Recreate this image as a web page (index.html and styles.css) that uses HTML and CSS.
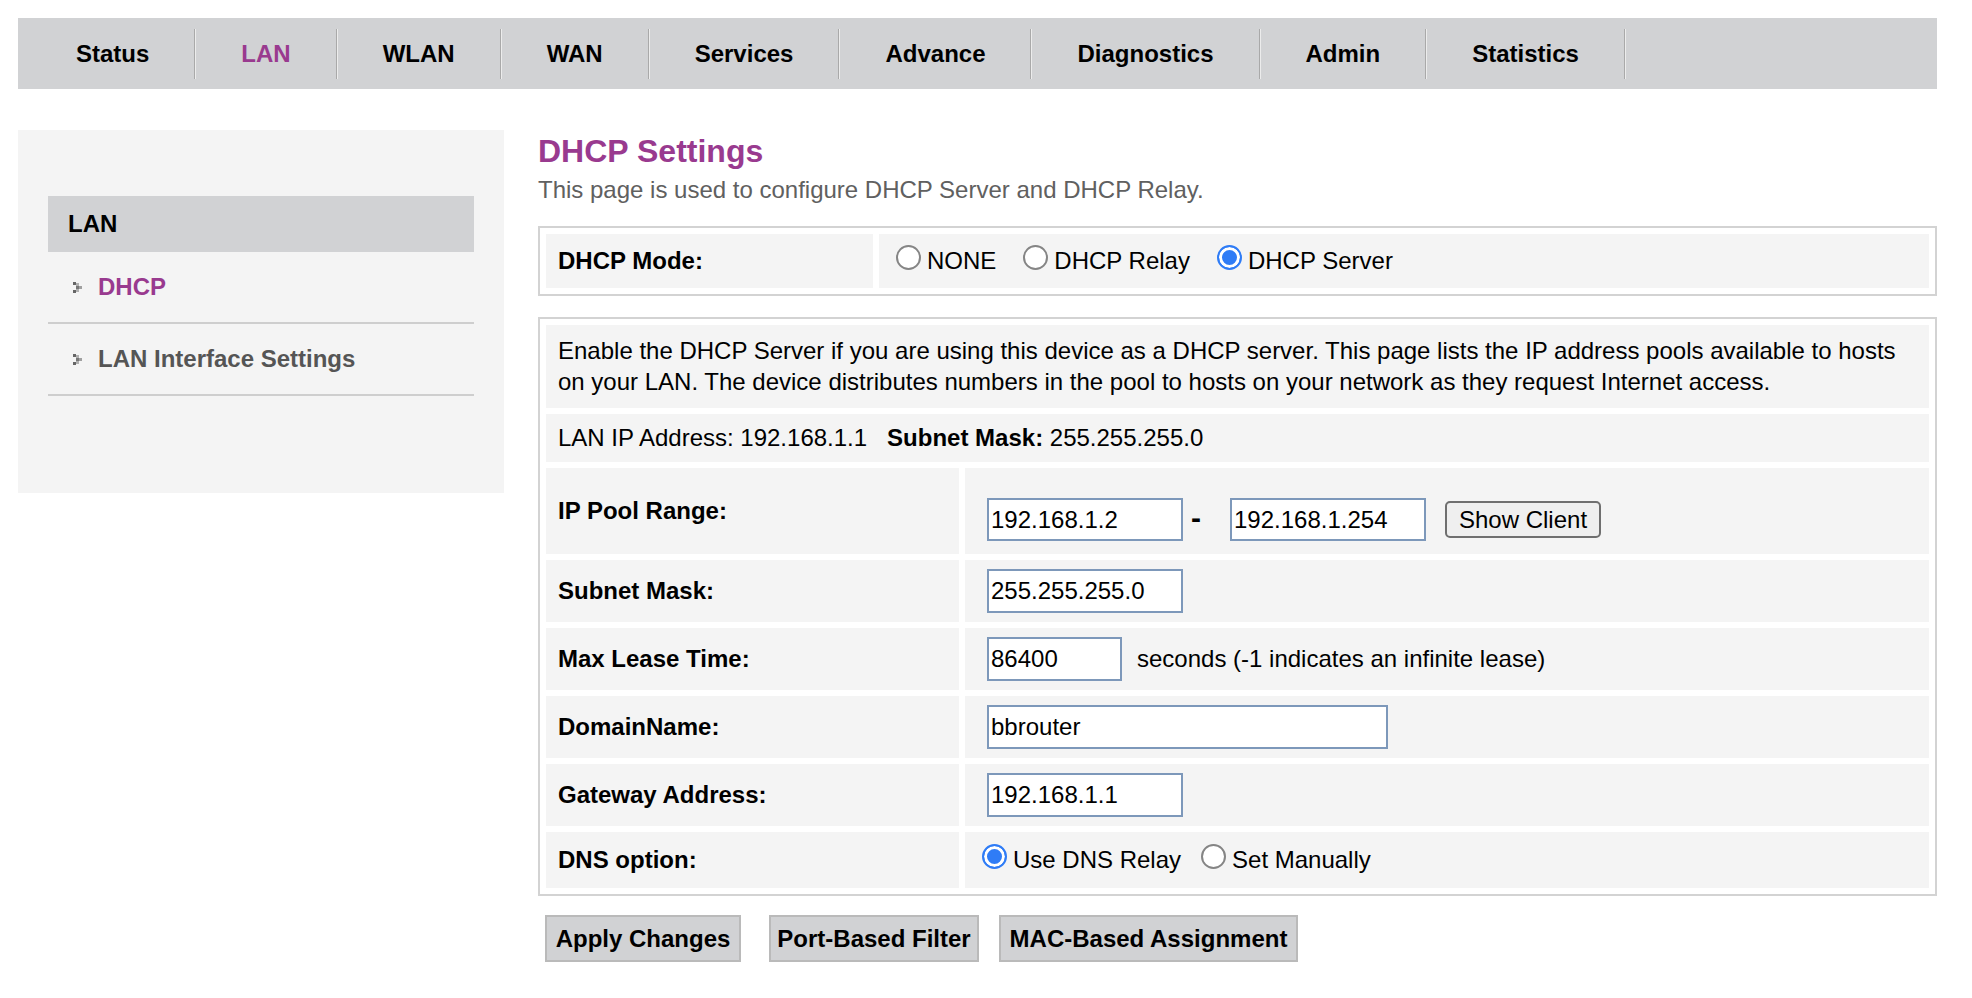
FILE: index.html
```html
<!DOCTYPE html>
<html lang="en">
<head>
<meta charset="utf-8">
<title>DHCP Settings</title>
<link rel="stylesheet" href="styles.css">
</head>
<body>
<div class="page">
  <nav class="topnav">
    <a class="nav-item" href="#">Status</a>
    <a class="nav-item active" href="#">LAN</a>
    <a class="nav-item" href="#">WLAN</a>
    <a class="nav-item" href="#">WAN</a>
    <a class="nav-item" href="#">Services</a>
    <a class="nav-item" href="#">Advance</a>
    <a class="nav-item" href="#">Diagnostics</a>
    <a class="nav-item" href="#">Admin</a>
    <a class="nav-item" href="#">Statistics</a>
  </nav>

  <div class="layout">
    <aside class="sidebar">
      <div class="side-head">LAN</div>
      <ul class="side-list">
        <li class="side-item active"><svg class="bullet" width="9" height="11" viewBox="0 0 9 11"><rect x="0" y="0" width="3" height="3" fill="#666"/><rect x="3" y="1" width="3" height="3" fill="#b0b0b0"/><rect x="3" y="4" width="3" height="3" fill="#777"/><rect x="6" y="4" width="3" height="3" fill="#a0a0a0"/><rect x="3" y="7" width="3" height="3" fill="#b0b0b0"/><rect x="0" y="8" width="3" height="3" fill="#666"/></svg>DHCP</li>
        <li class="side-item"><svg class="bullet" width="9" height="11" viewBox="0 0 9 11"><rect x="0" y="0" width="3" height="3" fill="#666"/><rect x="3" y="1" width="3" height="3" fill="#b0b0b0"/><rect x="3" y="4" width="3" height="3" fill="#777"/><rect x="6" y="4" width="3" height="3" fill="#a0a0a0"/><rect x="3" y="7" width="3" height="3" fill="#b0b0b0"/><rect x="0" y="8" width="3" height="3" fill="#666"/></svg>LAN Interface Settings</li>
      </ul>
    </aside>

    <main class="content">
      <h1 class="title">DHCP Settings</h1>
      <p class="subtitle">This page is used to configure DHCP Server and DHCP Relay.</p>

      <div class="box mode-box">
        <div class="cell label">DHCP Mode:</div>
        <div class="cell value radios">
          <label class="opt"><input class="radio" type="radio" name="mode">NONE</label>
          <label class="opt"><input class="radio" type="radio" name="mode">DHCP Relay</label>
          <label class="opt"><input class="radio" type="radio" name="mode" checked>DHCP Server</label>
        </div>
      </div>

      <div class="box form-box">
        <div class="cell full desc">Enable the DHCP Server if you are using this device as a DHCP server. This page lists the IP address pools available to hosts on your LAN. The device distributes numbers in the pool to hosts on your network as they request Internet access.</div>
        <div class="cell full info">LAN IP Address: 192.168.1.1&nbsp;&nbsp; <b>Subnet Mask:</b> 255.255.255.0</div>

        <div class="cell label">IP Pool Range:</div>
        <div class="cell value pool">
          <input class="field w-ip" type="text" value="192.168.1.2">
          <span class="dash">-</span>
          <input class="field w-ip" type="text" value="192.168.1.254">
          <button class="show-btn" type="button">Show Client</button>
        </div>

        <div class="cell label">Subnet Mask:</div>
        <div class="cell value"><input class="field w-ip" type="text" value="255.255.255.0"></div>

        <div class="cell label">Max Lease Time:</div>
        <div class="cell value"><input class="field w-lease" type="text" value="86400"><span class="hint">seconds (-1 indicates an infinite lease)</span></div>

        <div class="cell label">DomainName:</div>
        <div class="cell value"><input class="field w-domain" type="text" value="bbrouter"></div>

        <div class="cell label">Gateway Address:</div>
        <div class="cell value"><input class="field w-ip" type="text" value="192.168.1.1"></div>

        <div class="cell label dns-label">DNS option:</div>
        <div class="cell value radios dns">
          <label class="opt opt-tight"><input class="radio" type="radio" name="dns" checked>Use DNS Relay</label>
          <label class="opt"><input class="radio" type="radio" name="dns">Set Manually</label>
        </div>
      </div>

      <div class="actions">
        <button class="act-btn btn-apply" type="button">Apply Changes</button>
        <button class="act-btn btn-port" type="button">Port-Based Filter</button>
        <button class="act-btn btn-mac" type="button">MAC-Based Assignment</button>
      </div>
    </main>
  </div>
</div>
</body>
</html>
```

FILE: styles.css
```css
* { box-sizing: border-box; }

html, body {
  margin: 0;
  padding: 0;
  background: #ffffff;
}

body {
  font-family: "Liberation Sans", Arial, Helvetica, sans-serif;
  font-size: 24px;
  color: #000;
}

.page {
  width: 1937px;
  padding: 18px 0 0 18px;
}

/* ---------- top navigation ---------- */
.topnav {
  display: flex;
  align-items: center;
  height: 71px;
  background: #d1d2d4;
  padding-left: 13px;
}

.nav-item {
  display: block;
  height: 50px;
  line-height: 50px;
  padding: 0 45px;
  margin-right: 1px;
  font-weight: bold;
  color: #000;
  text-decoration: none;
  border-right: 1px solid #a9a9a9;
  box-shadow: 1px 0 0 #ececec;
}

.nav-item.active { color: #993a8f; }

/* ---------- layout ---------- */
.layout {
  display: flex;
  align-items: flex-start;
  margin-top: 41px;
}

.sidebar {
  width: 486px;
  flex: none;
  background: #f4f4f4;
  padding: 66px 30px 97px;
}

.side-head {
  height: 56px;
  line-height: 56px;
  padding-left: 20px;
  background: #d1d2d4;
  font-weight: bold;
}

.side-list {
  list-style: none;
  margin: 0;
  padding: 0;
}

.side-item {
  display: flex;
  align-items: center;
  height: 72px;
  padding-left: 25px;
  border-bottom: 2px solid #cecece;
  font-weight: bold;
  color: #555;
}

.side-item.active { color: #993a8f; }

.bullet {
  flex: none;
  margin-right: 16px;
}

/* ---------- content ---------- */
.content {
  flex: 1;
  margin-left: 34px;
}

.title {
  margin: 0;
  font-size: 32px;
  line-height: 42px;
  font-weight: bold;
  color: #993a8f;
}

.subtitle {
  margin: 3px 0 0;
  line-height: 30px;
  color: #606060;
}

.box {
  display: grid;
  gap: 6px;
  padding: 6px;
  border: 2px solid #d3d3d3;
  background: #fff;
}

.mode-box {
  margin-top: 21px;
  grid-template-columns: 327px 1fr;
}

.form-box {
  margin-top: 21px;
  grid-template-columns: 413px 1fr;
}

.cell {
  background: #f4f4f4;
  display: flex;
  align-items: center;
}

.mode-box .cell { min-height: 54px; }

.label {
  padding-left: 12px;
  font-weight: bold;
}

.value {
  padding: 9px 0 9px 22px;
}

.value.radios { padding-left: 17px; }

.full { grid-column: 1 / -1; }

.desc {
  display: block;
  padding: 10px 12px 11px;
  line-height: 31px;
}

.info {
  display: block;
  padding: 9px 12px;
  line-height: 30px;
}

.value.pool {
  min-height: 86px;
  padding-top: 30px;
  padding-bottom: 13px;
}

.dns { min-height: 56px; }

/* ---------- form controls ---------- */
.field {
  height: 44px;
  margin: 0;
  padding: 0 2px;
  border: 2px solid #7d98ba;
  border-radius: 0;
  background: #fff;
  font-family: inherit;
  font-size: 24px;
  color: #000;
  outline: none;
}

.pool .field { height: 43px; }

.w-ip { width: 196px; }
.w-lease { width: 135px; }
.w-domain { width: 401px; }

.dash {
  margin: 0 29px 4px 8px;
  font-size: 30px;
  font-weight: bold;
  line-height: 1;
}

.show-btn {
  height: 37px;
  margin-left: 19px;
  padding: 0 12px;
  border: 2px solid #6f6f6f;
  border-radius: 5px;
  background: #efefef;
  font-family: inherit;
  font-size: 24px;
  color: #000;
}

.hint { margin-left: 15px; }

.opt {
  display: flex;
  align-items: center;
  margin-right: 27px;
}

.opt-tight { margin-right: 20px; }

.radio {
  -webkit-appearance: none;
  appearance: none;
  flex: none;
  width: 25px;
  height: 25px;
  margin: 0 6px 8px 0;
  border: 2px solid #858585;
  border-radius: 50%;
  background: #fff;
}

.radio:checked {
  border-color: #2f7cf6;
  background: #2f7cf6;
  box-shadow: inset 0 0 0 3px #fff;
}

/* ---------- action buttons ---------- */
.actions {
  display: flex;
  margin-top: 19px;
  padding-left: 7px;
}

.act-btn {
  height: 47px;
  padding: 0;
  border: 2px solid #bababa;
  background: #d1d2d4;
  font-family: inherit;
  font-size: 24px;
  font-weight: bold;
  color: #000;
}

.btn-apply { width: 196px; }
.btn-port { width: 210px; margin-left: 28px; }
.btn-mac { width: 299px; margin-left: 20px; }
```
